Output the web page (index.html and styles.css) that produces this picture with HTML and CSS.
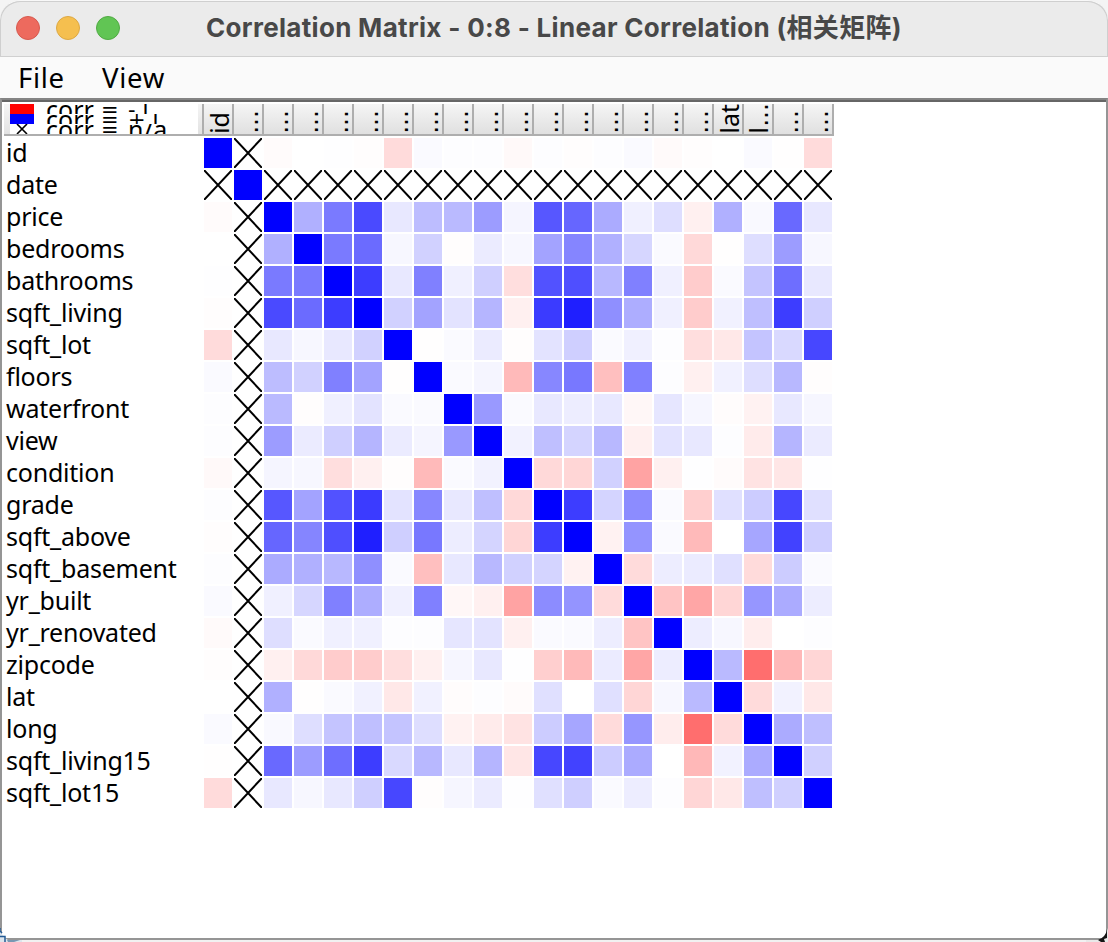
FILE: index.html
```
<!DOCTYPE html>
<html lang="en">
<head>
<meta charset="utf-8">
<title>Correlation Matrix</title>
<link rel="stylesheet" href="styles.css">
</head>
<body>
<div class="window">
  <header class="titlebar">
    <span class="light close"></span><span class="light minimize"></span><span class="light maximize"></span>
    <h1 class="title">Correlation Matrix - 0:8 - Linear Correlation (相关矩阵)</h1>
  </header>
  <nav class="menubar"><span class="menu-file">File</span><span class="menu-view">View</span></nav>
  <main class="content">
    <div class="header-row">
      <div class="legend">
        <div class="legend-line"><i class="swatch red"></i><span class="corr">corr</span><span class="equals">=</span><span class="number">-1</span></div>
        <div class="legend-line"><i class="swatch blue"></i><span class="corr">corr</span><span class="equals">=</span><span class="number">+1</span></div>
        <div class="legend-line"><svg class="swatch" viewBox="0 0 24 10"><path d="M7 0L17 10M17 0L7 10" stroke="#000" stroke-width="1.6"/></svg><span class="corr">corr</span><span class="equals">=</span><span class="missing">n/a</span></div>
      </div>
      <div class="columns" id="columns"></div>
    </div>
    <div class="matrix" id="matrix"></div>
  </main>
  <svg class="corner corner-left" viewBox="0 0 22 14"><path d="M0 0Q1 8 8 12H22V14H0Z" fill="#dce5ed"/><path d="M0 0V3L2 5M0 8.5H5V14" fill="none" stroke="#235a94" stroke-width="1.5"/><path d="M7 12H20L14 14H8Z" fill="#7898b2"/></svg>
  <svg class="corner corner-right" viewBox="0 0 22 14"><path d="M22 0Q20 8 14 12H0V14H22Z" fill="#e8e8e8"/><path d="M21 1Q20 9 12 12L15 14H19L18 11L21 10Z" fill="#151515"/></svg>
</div>
<script src="matrix.js"></script>
</body>
</html>
```
FILE: styles.css
```
* { box-sizing: border-box; }
body { margin: 0; background: #f4f4f4; font-family: "Noto Sans", sans-serif; color: #000; }
.window { position: relative; display: flex; flex-direction: column; width: 1108px; height: 942px; overflow: hidden; border-radius: 20px 20px 0 0; background: #f1f1f1; }
.titlebar { display: flex; align-items: center; flex: none; height: 57px; padding: 0 0 2px 16px; background: #ebebeb; border-top: 1px solid #f8f8f8; border-bottom: 1px solid #d0d0d0; border-radius: 20px 20px 0 0; box-shadow: inset 1px 1px 0 #cfcfcf, inset -1px 1px 0 #cfcfcf; }
.light { width: 24px; height: 24px; margin-right: 16px; border-radius: 50%; border: 1px solid; }
.close { background: #ed6a5e; border-color: #d65a4f; }
.minimize { background: #f5bf4f; border-color: #dca844; }
.maximize { background: #61c554; border-color: #51aa44; }
.title { margin: -4px 0 0 70px; font: bold 26px Inter, "Noto Sans CJK SC", sans-serif; letter-spacing: 0.31px; white-space: nowrap; color: #484848; }
.menubar { display: flex; flex: none; height: 41px; padding-left: 18px; background: #fafafa; font-size: 27.5px; letter-spacing: 0.7px; line-height: 41px; }
.menu-file { width: 84px; }
.content { flex: none; height: 842px; border-top: 2px solid #848484; border-left: 2px solid #959595; border-right: 2px solid #959595; border-bottom: 2px solid #959595; box-shadow: inset 0 2px #666; background: #fff; padding: 4px 0 0 2px; }
.header-row { display: flex; height: 32px; width: 830px; border-bottom: 2px solid #aeaeae; background: linear-gradient(#f5f5f5, #e2e2e2); }
.legend { width: 188px; margin: 0 4px 0 6px; background: #fff; }
.legend-line { display: flex; height: 10px; overflow: hidden; align-items: center; font-size: 25px; line-height: 34px; white-space: pre; }
.swatch { flex: none; width: 24px; height: 10px; margin-right: 12px; }
.corr { width: 55px; }
.equals { width: 27px; padding-top: 2px; font-family: "DejaVu Sans", sans-serif; font-size: 21px; }
.number { padding-top: 2px; font-family: "DejaVu Sans", sans-serif; font-size: 21px; letter-spacing: 3px; }
.missing { letter-spacing: 0.2px; }
.red { background: #f00; }
.blue { background: #00f; }
.columns { display: flex; border-left: 2px solid #aeaeae; }
.column { display: flex; align-items: flex-end; width: 30px; height: 30px; border-right: 2px solid #aeaeae; overflow: hidden; background: linear-gradient(#f5f5f5, #e0e0e0); }
.column span { flex: none; margin-left: 1px; writing-mode: vertical-rl; transform: rotate(180deg); width: 28px; line-height: 28px; font-size: 25px; white-space: nowrap; }
.column .dots { margin-left: 2px; font-family: "DejaVu Sans", sans-serif; line-height: 28px; }
.matrix { display: grid; grid-template-columns: 198px repeat(21, 28px); grid-auto-rows: 30px; gap: 2px; margin-top: 2px; }
.label { padding-left: 2px; font-size: 25px; letter-spacing: -0.22px; line-height: 29px; white-space: nowrap; }
.cross { display: block; width: 28px; height: 30px; }
.corner { position: absolute; bottom: 0; width: 22px; height: 14px; }
.corner-left { left: 0; }
.corner-right { right: 0; }
```
FILE: matrix.js
```
const names = ["id", "date", "price", "bedrooms", "bathrooms", "sqft_living", "sqft_lot", "floors", "waterfront", "view", "condition", "grade", "sqft_above", "sqft_basement", "yr_built", "yr_renovated", "zipcode", "lat", "long", "sqft_living15", "sqft_lot15"];

// Correlations in percent above the diagonal; the matrix is symmetric and null is undefined.
const upper = [
  [null, -1.5, 0, 0.4, -0.6, -14, 2, 0.8, 0.9, -2.5, 0.9, -0.8, 0.7, 2, -1.8, -0.8, 0, 2, -0.3, -14],
  Array(19).fill(null),
  [31, 52, 71, 9, 26, 27, 39, 4, 66, 60, 33, 6, 13, -6, 31, 2.5, 59, 9],
  [52, 58, 3, 18, -0.8, 8, 3, 36, 48, 31, 16, 1.8, -15, -0.5, 13, 39, 3],
  [76, 9, 50, 6, 19, -13, 68, 69, 28, 50, 6, -20, 2, 23, 57, 9],
  [18, 36, 11, 29, -6, 77, 88, 44, 32, 6, -20, 5.5, 25, 76, 19],
  [-0.2, 2, 8, -0.8, 11, 19, 1.8, 6, 0.8, -13, -9, 23, 15, 72],
  [2, 4, -27, 47, 53, -25, 50, 0.8, -6, 5.5, 13, 28, -0.9],
  [40, 1.8, 9, 7, 9, -3, 10, 3.5, -1.2, -5, 9, 3.5],
  [5, 25, 17, 28, -6, 11, 9, 0.9, -8, 29, 8],
  [-15, -16, 18, -36, -6, 0.2, -1.5, -11, -10, 0.3],
  [76, 17, 45, 2, -19, 12, 20, 72, 12],
  [-5, 42, 2, -27, 0, 35, 74, 19],
  [-14, 7, 8, 12, -14, 20, 1.8],
  [-23, -35, -16, 41, 33, 7],
  [7, 3, -7, 0, 0.8],
  [27, -57, -28, -16],
  [-14, 5, -9],
  [33, 25],
  [18.5]
];

const correlation = (a, b) => a === b ? 100 : upper[Math.min(a, b)][Math.abs(a - b) - 1];
const cross = '<svg class="cross" viewBox="0 0 28 30"><path d="M0 0L28 30M28 0L0 30" stroke="#000" stroke-width="2"/></svg>';

function cell(value) {
  if (value === null) return cross;
  const fade = Math.round(255 * (1 - Math.abs(value) / 100));
  const color = value < 0 ? `rgb(255,${fade},${fade})` : `rgb(${fade},${fade},255)`;
  return `<div style="background:${color}"></div>`;
}

document.getElementById("columns").innerHTML = names.map(name => {
  const text = name === "id" || name === "lat" ? name : name === "long" ? "l..." : "...";
  return `<div class="column"><span class="${text.endsWith(".") ? "dots" : "word"}">${text}</span></div>`;
}).join("");

document.getElementById("matrix").innerHTML = names.map((name, row) =>
  `<div class="label">${name}</div>` + names.map((_, col) => cell(correlation(row, col))).join("")
).join("");
```
